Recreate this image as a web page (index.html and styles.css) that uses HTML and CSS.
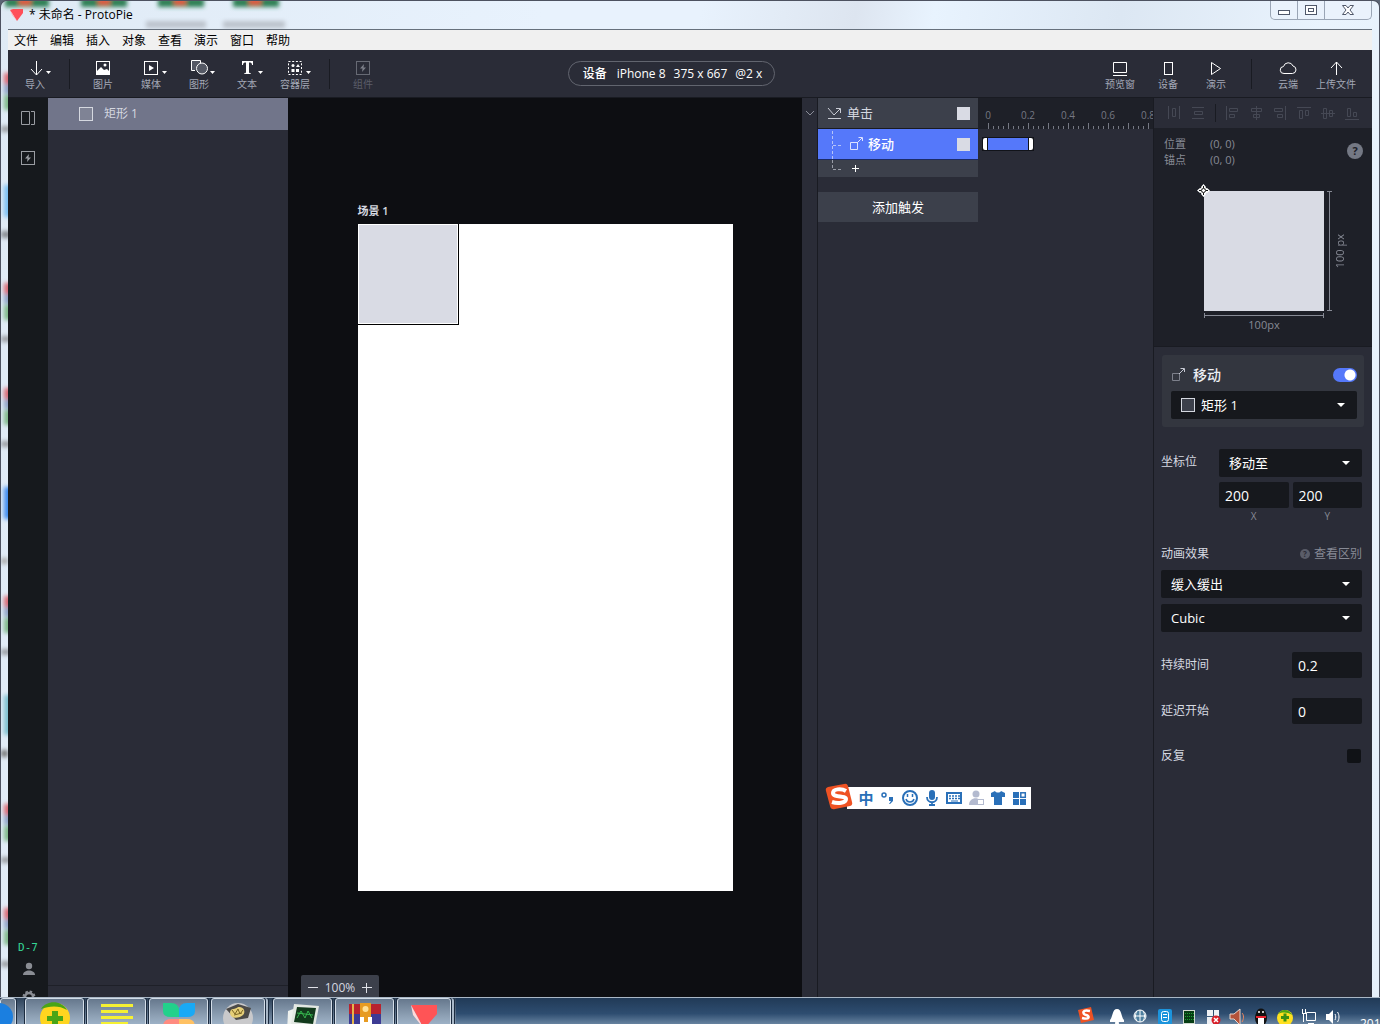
FILE: index.html
```html
<!DOCTYPE html>
<html lang="zh-CN">
<head>
<meta charset="utf-8">
<title>ProtoPie</title>
<link rel="stylesheet" href="styles.css">
</head>
<body>
<svg class="defs" aria-hidden="true">
  <defs>
    <filter id="soft" x="-20%" y="-20%" width="140%" height="140%"><feGaussianBlur stdDeviation="2"/></filter>
    <g id="shortcut"><rect width="9" height="11" fill="#d96a75"/><rect y="11" width="9" height="10" fill="#8fa2c4"/><rect y="22" width="9" height="15" fill="#7fb788"/><rect x="-3" y="53" width="10" height="6" fill="#9a9da2"/></g>
    <g id="bluecut"><rect width="9" height="32" fill="#7cc0f2"/><rect x="-3" y="46" width="10" height="7" fill="#888c92"/></g>
    <path id="caret" d="M0 0h5L2.500 3z" fill="#fff"/>
  </defs>
</svg>
<div class="window">
  <svg class="glass-side" width="8" height="1024" aria-hidden="true">
    <g filter="url(#soft)">
      <use href="#shortcut" x="3" y="72"/><use href="#bluecut" x="3" y="184"/><use href="#shortcut" x="3" y="282"/>
      <use href="#shortcut" x="3" y="387"/><rect x="3" y="486" width="9" height="32" fill="#3f8cf0"/><rect y="557" width="7" height="6" fill="#aaa"/>
      <use href="#shortcut" x="3" y="595"/><rect x="3" y="694" width="9" height="40" fill="#7fc0cf"/><rect y="749" width="7" height="7" fill="#777"/>
      <use href="#shortcut" x="3" y="803"/><use href="#shortcut" x="3" y="907"/>
    </g>
  </svg>
  <header class="titlebar">
    <svg class="glass-top" width="400" height="28" aria-hidden="true">
      <g filter="url(#soft)">
        <g fill="#2d8055"><rect x="4" y="-3" width="44" height="9"/><rect x="80" y="-3" width="46" height="9"/><rect x="157" y="-3" width="46" height="9"/><rect x="232" y="-3" width="46" height="9"/></g>
        <g fill="#e0563c"><rect x="18" y="-3" width="12" height="7"/><rect x="97" y="-3" width="12" height="7"/><rect x="173" y="-3" width="12" height="7"/><rect x="248" y="-3" width="12" height="7"/></g>
        <g fill="#bcc3cc"><rect x="145" y="20" width="60" height="7"/><rect x="222" y="20" width="62" height="7"/></g>
      </g>
    </svg>
    <svg class="app-logo" width="14" height="14" viewBox="0 0 14 14" aria-hidden="true"><path d="M0 2 3 1h10v4L7 13z" fill="#ff4f59"/><path d="M0 2l7 11-5-6z" fill="#ffb3b6"/></svg>
    <h1 class="title">* 未命名 - ProtoPie</h1>
    <div class="controls">
      <button aria-label="最小化"><svg width="14" height="12"><rect x="1.500" y="6.500" width="11" height="4" fill="#fff" stroke="#50586a"/></svg></button>
      <button aria-label="最大化"><svg width="14" height="12"><rect x="1.500" y="1.500" width="11" height="9" fill="#fff" stroke="#50586a"/><rect x="4.500" y="4.500" width="5" height="3" fill="#fff" stroke="#50586a"/></svg></button>
      <button class="close" aria-label="关闭"><svg width="14" height="12"><path d="M1.500 1.500h3.500l2 2.500 2-2.500h3.500l-3.500 4.500 3.500 4.500h-3.500l-2-2.500-2 2.500h-3.500l3.500-4.500z" fill="#fff" stroke="#50586a"/></svg></button>
    </div>
  </header>
  <div class="app">
    <nav class="menubar"><button>文件</button><button>编辑</button><button>插入</button><button>对象</button><button>查看</button><button>演示</button><button>窗口</button><button>帮助</button></nav>
    <div class="toolbar">
      <div class="tools">
        <button class="tool"><svg width="28" height="20"><path d="M15.500 3v14M10 11l5.500 6 5.500-6" fill="none" stroke="#fff"/><use href="#caret" x="25" y="13"/></svg>导入</button>
        <span class="divider"></span>
        <button class="tool"><svg width="28" height="20"><rect x="7.500" y="3.500" width="13" height="13" fill="none" stroke="#fff"/><path d="M8 13l4-4 3 3 3-1 2 2v3H8z" fill="#fff"/><circle cx="16" cy="7" r="1.500" fill="#fff"/></svg>图片</button>
        <button class="tool"><svg width="28" height="20"><rect x="7.500" y="3.500" width="13" height="13" fill="none" stroke="#fff"/><path d="M12 7v6l5-3z" fill="#fff"/><use href="#caret" x="25" y="13"/></svg>媒体</button>
        <button class="tool"><svg width="28" height="20"><path d="M10 12.500H6.500v-10h9V6" fill="#555965" stroke="#fff"/><circle cx="17" cy="10.500" r="5.500" fill="#555965" stroke="#fff"/><use href="#caret" x="25" y="13"/></svg>图形</button>
        <button class="tool"><svg width="28" height="20"><path d="M9 3h11v4h-1c0-2-1-2.500-3-2.500V14c0 1 .5 1.200 2 1.500v.5h-7v-.5c1.500-.3 2-.5 2-1.500V4.500c-2 0-3 .5-3 2.500H9z" fill="#fff"/><use href="#caret" x="25" y="13"/></svg>文本</button>
        <button class="tool"><svg width="28" height="20"><rect x="7.500" y="3.500" width="13" height="13" fill="none" stroke="#fff" stroke-dasharray="2 1.700"/><circle cx="12" cy="7.500" r="1.500" fill="#fff"/><path d="M17 6l2 3h-4zM10.500 11h3v3h-3zM15 11h3v3h-3z" fill="#fff"/><use href="#caret" x="25" y="13"/></svg>容器层</button>
        <span class="divider"></span>
        <button class="tool" disabled><svg width="28" height="20"><rect x="7.500" y="3.500" width="13" height="13" fill="none" stroke="#676a74"/><path d="M15 6l-4 4.500h2.500L13 14l4-4.500h-2.500z" fill="#7b7e88"/></svg>组件</button>
      </div>
      <button class="device"><b>设备</b><span>iPhone 8</span><span>375 x 667</span><span>@2 x</span></button>
      <div class="tools">
        <button class="tool"><svg width="28" height="20"><path d="M7.500 4.500h13v10h-13zM7 17.500h14" fill="none" stroke="#fff"/></svg>预览窗</button>
        <button class="tool"><svg width="28" height="20"><rect x="10.500" y="4.500" width="8" height="12" fill="none" stroke="#fff"/></svg>设备</button>
        <button class="tool"><svg width="28" height="20"><path d="M9.500 4.500v12l9-6z" fill="none" stroke="#fff"/></svg>演示</button>
        <span class="divider wide"></span>
        <button class="tool"><svg width="28" height="20"><path d="M10 15.500a3.500 3.500 0 0 1-.5-7 5 5 0 0 1 9.500-.5 3.800 3.800 0 0 1-.5 7.500z" fill="none" stroke="#fff"/></svg>云端</button>
        <button class="tool"><svg width="28" height="20"><path d="M14.500 17V4M9 10l5.500-6 5.500 6" fill="none" stroke="#fff"/></svg>上传文件</button>
      </div>
    </div>
    <main class="workspace">
      <aside class="rail">
        <button aria-label="场景"><svg width="16" height="16"><path d="M1.500 1.500h8v13h-8zM11 1.500h3.500v13H11" fill="none" stroke="#9a9da3"/></svg></button>
        <button aria-label="组件"><svg width="16" height="16"><rect x="1.500" y="1.500" width="13" height="13" fill="none" stroke="#9a9da3"/><path d="M9 4L5 8.500h2.500L7 12l4-4.500H8.500z" fill="#9a9da3"/></svg></button>
        <div class="rail-foot">
          <span class="days">D-7</span>
          <button aria-label="账户"><svg width="16" height="16"><circle cx="9" cy="5" r="3.200" fill="#8a8d94"/><path d="M3 14c0-6 12-6 12 0z" fill="#8a8d94"/></svg></button>
          <button aria-label="设置"><svg width="16" height="16"><circle cx="9" cy="8" r="4" fill="none" stroke="#8a8d94" stroke-width="2.500"/><circle cx="9" cy="8" r="5.500" fill="none" stroke="#8a8d94" stroke-width="2" stroke-dasharray="2.500 1.820"/></svg></button>
        </div>
      </aside>
      <aside class="layers">
        <button class="layer"><i class="box"></i>矩形 1</button>
        <div class="layers-foot"><svg width="24" height="14"><path d="M2.500 4h6M5.500 1v6M12 1.500h9v9h-9z" fill="none" stroke="#9a9da8"/></svg></div>
      </aside>
      <section class="canvas">
        <div class="scene">
          <span class="scene-name">场景 1</span>
          <div class="artboard"><div class="rect"></div></div>
        </div>
        <div class="zoom">
          <button aria-label="缩小"><svg width="10" height="10"><path d="M0 4.500h10" stroke="#dfe1e8"/></svg></button><span>100%</span><button aria-label="放大"><svg width="10" height="10"><path d="M0 4.500h10M4.500 0v10" stroke="#dfe1e8"/></svg></button>
        </div>
      </section>
      <button class="fold" aria-label="收起"><svg width="8" height="6"><path d="M0 1l4 4 4-4" fill="none" stroke="#8a8d98"/></svg></button>
      <section class="triggers">
        <div class="trigger"><svg width="16" height="14"><path d="M1 2l6 7 6-6M9 2.500h4.500V7M1 12.500h13" fill="none" stroke="#c9ccd4"/></svg><span>单击</span><i class="swatch"></i></div>
        <div class="response"><svg width="12" height="31"><path d="M2.500 2v29M3 16.500h9" fill="none" stroke="#b5c3f8" stroke-dasharray="3 2"/></svg><svg width="16" height="16"><path d="M1.500 6.500h7v7h-7zM8 7l5-5M9.500 1.500h4V5" fill="none" stroke="#dce3ff"/></svg><b>移动</b><i class="swatch"></i></div>
        <button class="add" aria-label="添加反应"><svg width="12" height="18"><path d="M2.500 0v9.500H11" fill="none" stroke="#9a9da8" stroke-dasharray="3 2"/></svg><svg width="9" height="9"><path d="M1 4.500h7M4.500 1v7" stroke="#fff"/></svg></button>
        <button class="add-trigger">添加触发</button>
      </section>
      <section class="timeline">
        <div class="ruler"><span>0</span><span>0.2</span><span>0.4</span><span>0.6</span><span>0.8</span></div>
        <div class="clip"><i></i><b></b><i></i></div>
      </section>
      <aside class="inspector">
        <div class="align">
          <svg width="16" height="16"><path d="M2.500 1v13M13.500 1v13M6.500 3.500h3v8h-3z"/></svg>
          <svg width="16" height="16"><path d="M2 2.500h12M2 13.500h12M4.500 6.500h8v3h-8z"/></svg>
          <span class="divider"></span>
          <svg width="16" height="16"><path d="M2.500 1v14M5.500 3.500h8v3h-8zM5.500 9.500h5v3h-5z"/></svg>
          <svg width="16" height="16"><path d="M8.500 1v14M3.500 3.500h10v3h-10zM5.500 9.500h6v3h-6z"/></svg>
          <svg width="16" height="16"><path d="M13.500 1v14M2.500 3.500h8v3h-8zM5.500 9.500h5v3h-5z"/></svg>
          <svg width="16" height="16"><path d="M1 2.500h14M3.500 5.500h3v8h-3zM9.500 5.500h3v5h-3z"/></svg>
          <svg width="16" height="16"><path d="M1 8.500h14M3.500 3.500h3v10h-3zM9.500 5.500h3v6h-3z"/></svg>
          <svg width="16" height="16"><path d="M1 14.500h14M3.500 3.500h3v8h-3zM9.500 7.500h3v4h-3z"/></svg>
        </div>
        <div class="info">
          <dl><dt>位置</dt><dd>(0, 0)</dd><dt>锚点</dt><dd>(0, 0)</dd></dl>
          <button class="help" aria-label="帮助">?</button>
          <div class="preview">
            <div class="shape"><svg class="anchor" width="13" height="13" aria-hidden="true"><path d="M6.500 0L9 3 8.500 4.500 10 4 13 6.500 10 9 8.500 8.500 9 10 6.500 13 4 10 4.500 8.500 3 9 0 6.500 3 4 4.500 4.500 4 3z" fill="#fff"/><path d="M6.500 2v2M6.500 9v2M2 6.500h2M9 6.500h2" stroke="#111"/><circle cx="6.500" cy="6.500" r="2" fill="#fff" stroke="#111"/></svg></div>
            <i class="vline"></i><span class="height">100 px</span>
            <i class="hline"></i><span class="width">100px</span>
          </div>
        </div>
        <div class="props">
          <div class="card">
            <div class="card-head"><svg width="16" height="16"><path d="M1.500 6.500h7v7h-7z" fill="none" stroke="#7d808b"/><path d="M8 7l5-5M9.500 1.500h4V5" fill="none" stroke="#c5c8d2"/></svg><label for="enabled">移动</label><input class="toggle" id="enabled" type="checkbox" checked></div>
            <div class="select target"><i class="box"></i><select aria-label="图层"><option>矩形 1</option></select></div>
          </div>
          <div class="position">
            <label for="mode">坐标位</label>
            <div class="fields">
              <div class="select"><select id="mode"><option>移动至</option></select></div>
              <div class="pair"><input id="px" value="200"><input id="py" value="200"><label for="px">X</label><label for="py">Y</label></div>
            </div>
          </div>
          <div class="easing">
            <div class="row"><label for="ease">动画效果</label><a href="#"><i>?</i>查看区别</a></div>
            <div class="select"><select id="ease"><option>缓入缓出</option></select></div>
            <div class="select"><select aria-label="曲线"><option>Cubic</option></select></div>
          </div>
          <div class="row"><label for="duration">持续时间</label><input id="duration" value="0.2"></div>
          <div class="row"><label for="delay">延迟开始</label><input id="delay" value="0"></div>
          <div class="row"><label for="repeat">反复</label><input class="check" id="repeat" type="checkbox"></div>
        </div>
      </aside>
    </main>
  </div>
</div>

<div class="ime">
  <svg class="ime-logo" width="28" height="28" viewBox="0 0 28 28" aria-hidden="true"><path d="M3 4Q0 5 1 8l4 15q1 4 5 3l15-3q3-1 2-4L23 3q-1-3-4-2z" fill="#ef5223"/><path d="M21 8C16 5 8 6 8 10c0 5 13 2 13 6 0 4-8 5-14 3" fill="none" stroke="#fff" stroke-width="4"/></svg>
  <span>中</span>
  <svg width="22" height="20"><circle cx="7" cy="7" r="2" fill="none" stroke="#2a70b8" stroke-width="1.500"/><path d="M12 9h4v4l-3 3h-1l2-3h-2z" fill="#2a70b8"/></svg>
  <svg width="22" height="20"><circle cx="11" cy="10" r="7" fill="none" stroke="#2a70b8" stroke-width="2"/><path d="M7 11c1 4 7 4 8 0M8.500 6v3M13.500 6v3" fill="none" stroke="#2a70b8" stroke-width="1.500"/></svg>
  <svg width="22" height="20"><rect x="8" y="2" width="6" height="10" rx="3" fill="#2a70b8"/><path d="M6 9c0 7 10 7 10 0M11 14v3M8 17h6" fill="none" stroke="#2a70b8" stroke-width="1.800"/></svg>
  <svg width="22" height="20"><rect x="4" y="5" width="14" height="10" fill="none" stroke="#2a70b8" stroke-width="2"/><path d="M6 8h11M6 10.500h11" stroke="#2a70b8" stroke-width="1.500" stroke-dasharray="2 1"/><path d="M8 13h7" stroke="#2a70b8"/></svg>
  <svg width="22" height="20"><circle cx="11" cy="6" r="3.500" fill="#b3bacf"/><path d="M4 17c0-9 13-9 13 0z" fill="#b3bacf"/><rect x="12.500" y="11.500" width="6" height="5" fill="#fff" stroke="#b3bacf"/></svg>
  <svg width="22" height="20"><path d="M8 3c1 2 5 2 6 0l4 2v4h-3v8H7V9H4V5z" fill="#2a70b8"/></svg>
  <svg width="22" height="20"><path d="M4 4h6v6H4zM4 11h6v6H4zM11 11h6v6h-6z" fill="#2a70b8"/><rect x="11.800" y="4.800" width="4.500" height="4.500" fill="none" stroke="#2a70b8" stroke-width="1.500"/></svg>
</div>

<footer class="taskbar">
  <div class="tasks">
    <button class="task first" aria-label="浏览器"><svg width="32" height="32"><circle cx="16" cy="16" r="14" fill="#1b7fe0"/></svg></button>
    <button class="task" aria-label="安全卫士"><svg width="32" height="32"><circle cx="16" cy="17" r="15" fill="#ffd51f"/><path d="M2 8C8-1 22-1 28 9c-8-5-18-4-26-1z" fill="#4aa516"/><path d="M13 10h6v5h5v5h-5v6h-6v-6H8v-5h5z" fill="#4aa516"/></svg></button>
    <button class="task" aria-label="笔记"><svg width="32" height="32"><path d="M0 4.500h32M0 10.500h27M0 16.500h32M0 22.500h27" stroke="#f5f032" stroke-width="3"/></svg></button>
    <button class="task" aria-label="文档"><svg width="32" height="32"><path d="M0 2h8q8 0 8 8v6H8q-8 0-8-6z" fill="#22d18b"/><path d="M32 2h-8q-8 0-8 8v6h8q8 0 8-6z" fill="#19a9f5"/><path d="M8 18h8v14H0v-6q0-8 8-8z" fill="#ff8b80"/><path d="M24 18h-8v14h16v-6q0-8-8-8z" fill="#ffc163"/></svg></button>
    <button class="task stacked" aria-label="图库"><svg width="32" height="32"><circle cx="16" cy="17" r="15" fill="#c9c9cb"/><path d="M4 8l12-5 13 4-3 10-12 2z" fill="#4b4a48"/><path d="M8 12c0-6 6-3 8-6 6-1 8 5 5 8s-12 5-13-2z" fill="#e6cf78"/><path d="M10 9l3 4 3-5 2 5 3-4M12 14l8-2" stroke="#7a6423" fill="none"/></svg></button>
    <button class="task" aria-label="监视器"><svg width="32" height="32"><path d="M1 10l8-3-2 20-7 5z" fill="#eef1ee"/><path d="M7 3l25 2-4 21-24-3z" fill="#e3e8e3"/><path d="M10 6l19 1-3 16-19-2z" fill="#123a1c"/><path d="M10 17l4-7 4 7 3-7 4 7M10 12l16 2" stroke="#35b44d" fill="none"/></svg></button>
    <button class="task" aria-label="压缩"><svg width="32" height="32"><path d="M0 3h32v10H0z" fill="#b8232e"/><path d="M0 13h32v10H0z" fill="#3d3b94"/><path d="M0 23h32v9H0z" fill="#3c8c3b"/><path d="M4 3v28" stroke="#e6b74c" stroke-width="2"/><path d="M11 2h11v30H11z" fill="#e79b22"/><circle cx="16.500" cy="8" r="3" fill="#ffe095"/><path d="M11 16h4v5h4v-5h4v8H11z" fill="#fff"/></svg></button>
    <button class="task stacked" aria-label="ProtoPie"><svg width="32" height="32"><path d="M3 4h26v9L16 28z" fill="#ff5456"/><path d="M3 4l2 10 11 14z" fill="#ffd9d9"/></svg></button>
  </div>
  <div class="tray">
    <svg class="lead" width="24" height="24"><path d="M5 4l13-3 3 13-13 3z" fill="#ef5223"/><path d="M17 5c-8-2-8 3-4 4s4 5-4 3" fill="none" stroke="#fff" stroke-width="2.500"/></svg>
    <svg width="24" height="24"><path d="M12 4c5 0 4 8 7 11v2H5v-2c3-3 2-11 7-11z" fill="#fff"/><circle cx="12" cy="18" r="2" fill="#fff"/></svg>
    <svg width="24" height="24"><circle cx="11" cy="11" r="6" fill="#4d7f9f" stroke="#fff"/><path d="M5 11h12M11 5v12M8 6c-2 3-2 7 0 10M14 6c2 3 2 7 0 10" stroke="#fff" fill="none"/></svg>
    <svg width="24" height="24"><rect x="5" y="4" width="14" height="16" rx="2" fill="#1c94dc"/><rect x="8.500" y="6.500" width="7" height="10" rx="2" fill="none" stroke="#fff"/><path d="M10 9.500h4M10 12.500h4" stroke="#fff"/></svg>
    <svg width="24" height="24"><rect x="6.500" y="5.500" width="11" height="13" fill="#063d13" stroke="#d0d8d0"/><path d="M8 8.500h9M8 11.500h9M8 14.500h9" stroke="#1f9c35" stroke-dasharray="1 1"/></svg>
    <svg width="24" height="24"><path d="M6 5h6v6H6zM13 5h5v6h-5zM6 12h6v7H6z" fill="#eef0f4"/><circle cx="15" cy="15" r="4.500" fill="#d91e28"/><path d="M13 13l4 4M17 13l-4 4" stroke="#fff" stroke-width="1.500"/></svg>
    <svg width="24" height="24"><path d="M5 9h4l6-5v16l-6-6H5z" fill="#b4533a" stroke="#e8d5cb"/><path d="M17 8c2 2 2 6 0 9" stroke="#ed865e" fill="none"/></svg>
    <svg width="24" height="24"><ellipse cx="12" cy="13" rx="6" ry="8" fill="#111"/><circle cx="12" cy="8" r="4.500" fill="#111"/><path d="M9 12h6v8H9z" fill="#fff"/><path d="M7 11h10v2H7z" fill="#e5202c"/><circle cx="10" cy="7" r="1" fill="#fff"/><circle cx="14" cy="7" r="1" fill="#fff"/></svg>
    <svg width="24" height="24"><circle cx="12" cy="13" r="8" fill="#ffe01f"/><path d="M5 9c4-6 11-5 14 1-5-3-9-3-14-1z" fill="#4aa516"/><path d="M12 8.500v8M8 12.500h8" stroke="#3a8f13" stroke-width="3"/></svg>
    <svg width="24" height="24"><path d="M9.500 7.500h9v8h-9zM11 18.500h6M5.500 4v4M8.500 4v4M5 8.500h4M6.500 9v8" fill="none" stroke="#fff"/></svg>
    <svg width="24" height="24"><path d="M5 9h3l4-4v14l-4-4H5z" fill="#fff"/><path d="M14 9c1 2 1 4 0 6M16.500 7c2 3 2 7 0 10" fill="none" stroke="#fff"/></svg>
    <time>201</time>
  </div>
</footer>
</body>
</html>
```
FILE: styles.css
```css
* { box-sizing: border-box; }
body {
  margin: 0;
  height: 100vh;
  overflow: hidden;
  background: #5b6474;
  font: 12px/16px "Open Sans", "Noto Sans CJK SC", sans-serif;
  color: #d5d8e0;
}
button, input, select { font: inherit; color: inherit; }
button { margin: 0; padding: 0; border: 0; background: none; }
svg { display: block; flex: none; }
i { font-style: normal; }
.defs { position: absolute; width: 0; height: 0; }

/* Window frame */
.window {
  position: relative;
  display: flex;
  flex-direction: column;
  height: 100vh;
  padding: 0 7px 7px;
  border: 1px solid #4d5260;
  border-bottom: 0;
  border-radius: 7px 7px 0 0;
  background: linear-gradient(100deg, #dfeaf5, #e8f2fd 35%, #e8f2fd 45%, #dde5f0 55%, #e8f3fe 60%, #dce7f3 72%, #e9f3fd 85%, #e5effa);
  overflow: hidden;
}
.glass-side { position: absolute; left: 0; top: 0; }
.glass-top { position: absolute; left: 0; top: 0; }
.titlebar { display: flex; align-items: flex-start; height: 28px; flex: none; }
.app-logo { position: relative; margin: 7px 5px 0 2px; }
.title { position: relative; margin: 5px auto 0 0; font-size: 12px; line-height: 18px; font-weight: 400; color: #000; }
.controls { display: flex; border: 1px solid #9aa5b5; border-top: 0; border-radius: 0 0 5px 5px; overflow: hidden; background: #eaf2fc; }
.controls button { display: grid; place-items: center; width: 27px; height: 18px; border-right: 1px solid #9aa5b5; }
.controls .close { width: 46px; border-right: 0; }

.app { position: relative; display: flex; flex-direction: column; flex: 1; min-height: 0; border-top: 1px solid #66707c; background: #2a2c37; }
.menubar { display: flex; gap: 12px; height: 20px; flex: none; padding: 2px 6px 0; background: #f0f0f0; color: #000; line-height: 18px; }

/* Toolbar */
.toolbar { display: flex; align-items: center; justify-content: space-between; height: 48px; flex: none; padding: 0 12px 0 3px; border-bottom: 1px solid #191b22; }
.tools { display: flex; align-items: center; }
.tool { display: flex; flex-direction: column; align-items: center; width: 48px; font-size: 10px; line-height: 12px; color: #a3a8b6; white-space: nowrap; }
.tool svg { overflow: visible; }
.tool:disabled { color: #5a5d69; }
.divider { width: 20px; height: 30px; background: linear-gradient(#191b22, #191b22) center / 1px 100% no-repeat; }
.divider.wide { width: 24px; }
.device { display: flex; gap: 8px; margin-right: 140px; padding: 0 12px 0 14px; height: 25px; align-items: center; border: 1px solid #62656f; border-radius: 13px; color: #fff; white-space: nowrap; }
.device b { font-weight: 500; margin-right: 2px; }

.workspace { display: flex; flex: 1; min-height: 0; }

.rail { display: flex; flex-direction: column; align-items: center; gap: 24px; width: 40px; flex: none; padding: 12px 0; background: #16191d; }
.rail-foot { display: flex; flex-direction: column; align-items: center; gap: 5px; margin-top: auto; }
.days { font-family: "DejaVu Sans Mono", monospace; font-size: 11px; color: #35d795; }
.rail-foot button:last-child { margin-top: 7px; }

.layers { display: flex; flex-direction: column; width: 240px; flex: none; background: #2a2c37; }
.layer { display: flex; align-items: center; gap: 11px; height: 32px; padding-left: 31px; background: #71758a; }
.box { width: 14px; height: 14px; border: 1px solid #d5d8e0; background: #ffffff1a; }
.layers-foot { margin-top: auto; height: 32px; padding: 10px 16px; border-top: 1px solid #1e2028; }

/* Canvas */
.canvas { position: relative; display: flex; align-items: center; justify-content: center; flex: 1; background: #0d0e12; overflow: hidden; }
.scene { display: flex; flex-direction: column; padding-bottom: 20px; font-size: 11px; line-height: 14px; }
.scene-name { margin-bottom: 6px; font-weight: 600; }
.artboard { width: 375px; height: 667px; background: #fff; }
.rect { width: 101px; height: 101px; border: solid #000; border-width: 0 1px 1px 0; box-shadow: inset 0 0 0 1px #fff; background: #d9dbe4; }
.zoom { position: absolute; left: 13px; bottom: 16px; display: flex; align-items: center; justify-content: space-between; width: 78px; height: 26px; padding: 0 7px; border-radius: 2px; background: #3c404b; }

.fold { display: flex; width: 16px; flex: none; padding: 12px 4px; border-right: 1px solid #191b22; background: #2a2c37; }

/* Triggers and timeline */
.triggers { width: 160px; flex: none; font-size: 13px; }
.trigger, .response { display: flex; align-items: center; padding-right: 8px; }
.trigger { gap: 4px; height: 31px; padding-left: 9px; border-bottom: 1px solid #191b22; background: #3c404b; }
.response { height: 31px; padding-left: 12px; border-bottom: 1px solid #1c2b66; background: #5578fa; color: #fff; }
.response svg + svg { margin: 0 3px 0 7px; }
.response b { font-weight: 500; }
.swatch { width: 13px; height: 13px; margin-left: auto; background: #d9dbe4; }
.add { display: flex; align-items: center; gap: 9px; width: 100%; height: 17px; padding-left: 12px; background: #3c404b; }
.add-trigger { width: 100%; height: 30px; margin-top: 15px; background: #3c404b; color: #fff; }
.timeline { width: 175px; flex: none; overflow: hidden; }
.ruler {
  display: flex;
  height: 31px;
  padding-top: 10px;
  width: 200px;
  margin-left: -10px;
  font-size: 10px;
  line-height: 14px;
  color: #757883;
  background:
    repeating-linear-gradient(90deg, #757883 0 1px, transparent 1px 20px) 20px 100% / 200px 6px no-repeat,
    repeating-linear-gradient(90deg, #757883 0 1px, transparent 1px 5px) 20px 100% / 200px 3px no-repeat,
    #1e2028;
}
.ruler span { width: 40px; flex: none; text-align: center; }
.clip { display: flex; gap: 1px; height: 14px; width: 52px; margin: 8px 0 0 4px; padding: 1px; background: #111319; }
.clip i { width: 4px; border-radius: 2px 0 0 2px; background: #fff; }
.clip i:last-child { border-radius: 0 2px 2px 0; }
.clip b { flex: 1; background: #5578fa; }

/* Inspector */
.inspector { width: 219px; flex: none; border-left: 1px solid #191b22; }
.align { display: flex; align-items: center; gap: 8px; height: 30px; padding: 0 12px; }
.align path { fill: none; stroke: #454854; }
.align .divider { width: 3px; height: 18px; }
.info { display: grid; grid-template-columns: 1fr 16px; height: 219px; align-content: start; padding: 8px 9px 0 10px; background: #1e2028; border-bottom: 1px solid #191b22; color: #878a95; font-size: 11px; }
dl { display: grid; grid-template-columns: 46px 1fr; margin: 0; }
dd { margin: 0; }
.help { width: 16px; height: 16px; margin-top: 7px; border-radius: 50%; background: #747884; color: #1e2028; font-weight: 700; }
.preview { grid-column: 1 / -1; display: grid; grid-template-columns: 120px 5px 10px; justify-content: start; align-items: center; gap: 2px 3px; padding: 23px 0 0 40px; }
.shape { position: relative; height: 120px; background: #d9dbe4; }
.anchor { position: absolute; left: -7px; top: -7px; }
.vline { height: 120px; border: solid #878a95; border-width: 1px 0; background: linear-gradient(#878a95, #878a95) center / 1px 100% no-repeat; }
.hline { height: 5px; border: solid #878a95; border-width: 0 1px; background: linear-gradient(#878a95, #878a95) center / 100% 1px no-repeat; }
.height { writing-mode: vertical-rl; transform: rotate(180deg); text-align: center; line-height: 10px; }
.width { grid-row: 3; grid-column: 1; text-align: center; line-height: 10px; }

.props { display: flex; flex-direction: column; gap: 20px; padding: 8px 10px 0 7px; }
.card { margin-right: -2px; padding: 8px 7px 8px 9px; border-radius: 3px; background: #33363f; margin-left: 1px; }
.card-head { display: flex; align-items: center; gap: 6px; height: 24px; margin-bottom: 4px; font-size: 14px; font-weight: 500; color: #eceef3; }
.toggle { appearance: none; width: 24px; height: 14px; margin: 0 0 0 auto; border-radius: 7px; background: radial-gradient(circle at 17px 7px, #fff 5px, transparent 6px), #5578fa; }
.select { position: relative; display: flex; align-items: center; height: 28px; border-radius: 2px; background: #16181d; color: #fff; }
.select::after { content: ""; position: absolute; right: 12px; top: 12px; border: solid transparent; border-width: 4px 4px 0; border-top-color: #fff; pointer-events: none; }
select { appearance: none; flex: 1; height: 28px; padding: 0 10px; border: 0; background: none; font-size: 13px; }
.target .box { margin-left: 10px; background: #3c404b; }
.target select { padding-left: 6px; }
.position { display: flex; justify-content: space-between; margin-top: 2px; }
.position > label { margin-top: 5px; }
.fields { width: 143px; }
.pair { display: grid; grid-template-columns: 1fr 1fr; column-gap: 4px; margin-top: 5px; }
.pair label { text-align: center; font-size: 10px; color: #878a95; }
input:not([type]) { width: 70px; height: 26px; padding: 0 6px; border: 0; border-radius: 2px; background: #16181d; color: #fff; font-size: 14px; }
.pair input:not([type]) { width: 100%; }
.row { display: flex; align-items: center; justify-content: space-between; }
.easing { display: flex; flex-direction: column; gap: 6px; }
.easing .row { height: 20px; }
.easing a { display: flex; align-items: center; gap: 4px; color: #878a95; text-decoration: none; }
.easing a i { width: 10px; height: 10px; border-radius: 50%; background: #5a5d69; color: #2a2c37; font-size: 8px; line-height: 10px; text-align: center; font-weight: 700; }
.check { appearance: none; width: 14px; height: 14px; margin: 5px 1px; border-radius: 2px; background: #101216; }

/* Input method bar */
.ime { position: absolute; left: 827px; top: 787px; display: flex; align-items: center; height: 22px; padding: 0 0 0 28px; background: linear-gradient(90deg, transparent 20px, #fff 20px); }
.ime-logo { position: absolute; left: -2px; top: -4px; }
.ime span { width: 22px; text-align: center; font-size: 15px; font-weight: 700; color: #2a70b8; }

/* Taskbar */
.taskbar {
  position: fixed;
  inset: auto 0 0;
  display: flex;
  justify-content: space-between;
  height: 27px;
  border-top: 1px solid #a9b7c6;
  background: linear-gradient(#213a57, #2e4d70 60%, #66829f);
  overflow: hidden;
}
.tasks { display: flex; gap: 3px; background: linear-gradient(#2e4259, #7d93ac); }
.task { display: flex; justify-content: center; width: 59px; height: 40px; padding-top: 2px; border: 1px solid #d3dde8; border-radius: 3px 3px 0 0; background: linear-gradient(#66788d, #92a5b9 50%, #b3cae2); box-shadow: 0 0 0 1px #1c2c40; }
.task.first { width: 16px; justify-content: flex-end; margin-right: 6px; }
.task.stacked { width: 54px; margin-right: 5px; box-shadow: 0 0 0 1px #1c2c40, 3px 0 0 #a9b8c8, 4px 0 0 #1c2c40; }
.tray { display: flex; margin-right: 15px; padding-top: 7px; }
.tray .lead { margin: 1px 8px 0 0; }
time { width: 20px; margin: 11px -15px 0 15px; color: #fff; }
```
